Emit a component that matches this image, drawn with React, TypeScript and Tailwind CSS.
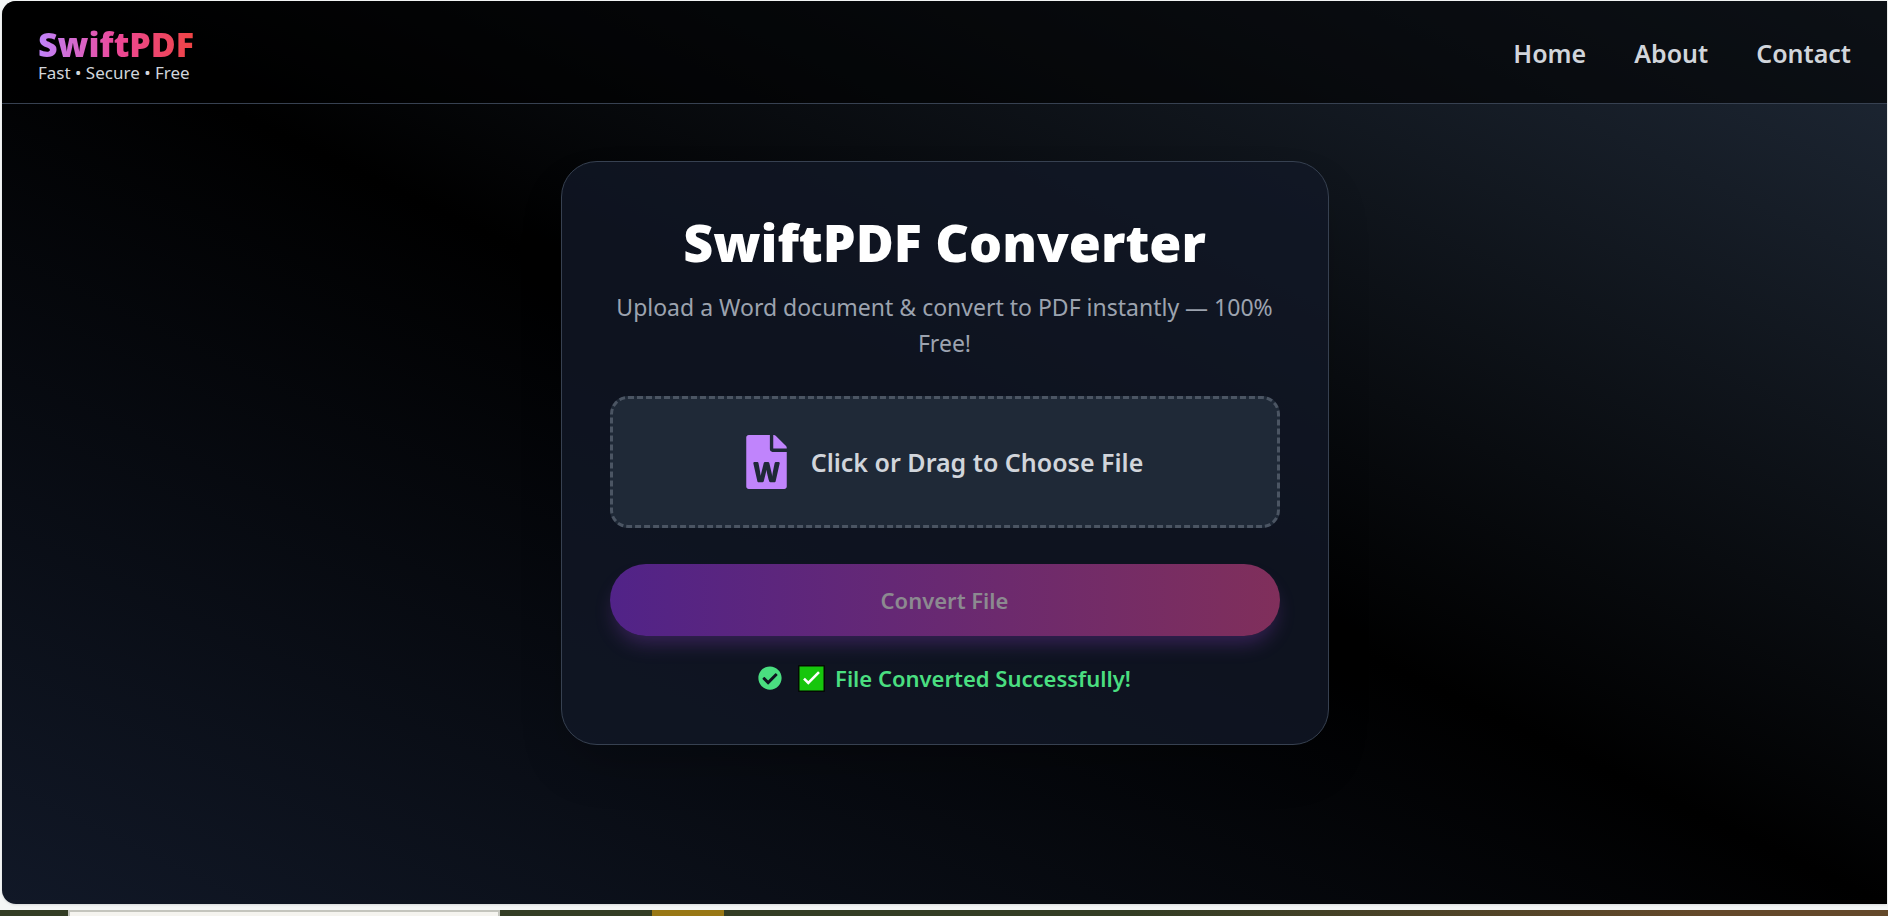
import React from "react";
import { FaCheckCircle, FaFileWord } from "react-icons/fa";

const links = ["Home", "About", "Contact"];

function CheckBadge() {
  return (
    <svg viewBox="0 0 27 27" className="size-[27px] shrink-0" role="img" aria-label="Done">
      <rect width="27" height="27" rx="1" fill="#050805" />
      <rect x="1.5" y="1.5" width="24" height="24" fill="#16c60c" />
      <path d="M6 13.6l4.3 4.3L21 7.2" fill="none" stroke="#fff" strokeWidth="2.6" />
    </svg>
  );
}

function Header() {
  return (
    <header className="flex items-center justify-between border-b border-[#374151] bg-black/60 px-9 pt-6 pb-5">
      <div className="flex flex-col">
        <span className="self-start bg-linear-to-r/srgb from-[#c084fc] via-[#ec4899] to-[#ef4444] bg-clip-text text-[34px] leading-[38px] font-black text-transparent">
          SwiftPDF
        </span>
        <span className="text-[17px] leading-5 text-[#d1d5db]">Fast • Secure • Free</span>
      </div>
      <nav className="flex gap-12 pb-0.5">
        {links.map((label) => (
          <a key={label} href={"#" + label.toLowerCase()} className="text-[25px] leading-10 font-semibold text-[#d1d5db]">
            {label}
          </a>
        ))}
      </nav>
    </header>
  );
}

function Converter() {
  return (
    <section className="w-full max-w-[768px] rounded-[36px] border border-[#374151] bg-[#111827]/80 p-12 shadow-2xl">
      <h1 className="text-center text-[52px] leading-16 font-black text-white">SwiftPDF Converter</h1>
      <p className="mt-[15px] text-center text-[23px] leading-9 text-[#9ca3af]">
        Upload a Word document &amp; convert to PDF instantly — 100% Free!
      </p>
      <label
        htmlFor="document"
        className="mt-[35px] flex h-[132px] cursor-pointer items-center justify-center gap-6 rounded-[18px] border-3 border-dashed border-[#4b5563] bg-[#1f2937]"
      >
        <FaFileWord className="h-[54px] w-[41px] text-[#c084fc]" />
        <span className="text-[25px] leading-9 font-semibold text-[#d1d5db]">Click or Drag to Choose File</span>
        <input id="document" type="file" accept=".doc,.docx" className="sr-only" />
      </label>
      <button
        type="button"
        disabled
        className="mt-9 h-[72px] w-full rounded-full bg-linear-to-r/srgb from-[#512388] to-[#802f5b] text-[22px] leading-9 font-semibold text-[#8c8a90] shadow-[0_12px_20px_-5px_rgba(152,70,220,0.3)]"
      >
        Convert File
      </button>
      <p className="mt-6 flex items-center justify-center gap-4 text-[22px] leading-9 font-semibold text-[#4ade80]">
        <FaCheckCircle className="size-6 shrink-0" />
        <span className="flex items-center gap-2.5">
          <CheckBadge />
          <span>File Converted Successfully!</span>
        </span>
      </p>
    </section>
  );
}

function Taskbar() {
  return (
    <div className="flex h-1.5 bg-linear-to-r/srgb from-[#333d24] from-60% to-[#64492a] to-90%">
      <div className="w-[68px]" />
      <div className="w-[432px] border-x-2 border-t-2 border-[#c4c5bd] bg-[#f5f4ef]" />
      <div className="ml-[152px] w-[72px] bg-[#997815]" />
    </div>
  );
}

export default function App() {
  return (
    <div className="flex min-h-screen flex-col bg-[#f4f6f6] font-['Noto_Sans','Open_Sans',sans-serif]">
      <div className="mt-px mr-px mb-1.5 ml-0.5 flex grow flex-col overflow-hidden rounded-l-[14px] bg-linear-to-tr/srgb from-[#111827] via-black to-[#1f2937] shadow-sm">
        <Header />
        <main className="flex grow items-start justify-center pt-[57px] pb-12">
          <Converter />
        </main>
      </div>
      <Taskbar />
    </div>
  );
}
